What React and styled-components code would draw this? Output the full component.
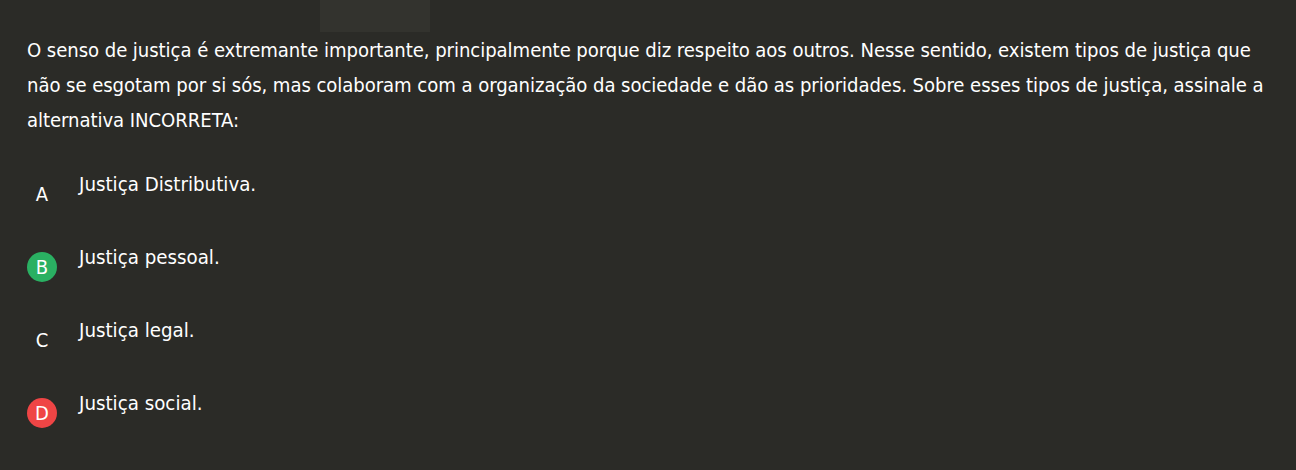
import styled, { createGlobalStyle } from "styled-components";

const GlobalStyle = createGlobalStyle`
  html, body {
    margin: 0;
    background: #2b2b27;
  }
  body {
    font-family: "DejaVu Sans Condensed", "DejaVu Sans", sans-serif;
    color: #ffffff;
  }
`;

const options = [
  { letter: "A", text: "Justiça Distributiva." },
  { letter: "B", text: "Justiça pessoal.", state: "correct" },
  { letter: "C", text: "Justiça legal." },
  { letter: "D", text: "Justiça social.", state: "wrong" },
];

export default function App() {
  return (
    <StyledPage>
      <GlobalStyle />
      <StyledTopBar>
        <StyledTab />
      </StyledTopBar>
      <StyledQuestion>
        O senso de justiça é extremante importante, principalmente porque diz
        respeito aos outros. Nesse sentido, existem tipos de justiça que não se
        esgotam por si sós, mas colaboram com a organização da sociedade e dão
        as prioridades. Sobre esses tipos de justiça, assinale a alternativa
        INCORRETA:
      </StyledQuestion>
      <StyledOptions>
        {options.map((option) => (
          <StyledOption key={option.letter}>
            <StyledLetter state={option.state}>{option.letter}</StyledLetter>
            <StyledOptionText>{option.text}</StyledOptionText>
          </StyledOption>
        ))}
      </StyledOptions>
    </StyledPage>
  );
}

const StyledPage = styled.div`
  width: 1296px;
  height: 470px;
  box-sizing: border-box;
  padding: 0 27px;
  overflow: hidden;
`;

const StyledTopBar = styled.div`
  display: flex;
  height: 32px;
  padding-left: 293px;
`;

const StyledTab = styled.div`
  width: 110px;
  height: 32px;
  background-color: #33332e;
`;

const StyledQuestion = styled.p`
  margin: 1px 0 0;
  font-size: 20.1px;
  letter-spacing: -0.06px;
  line-height: 35px;
`;

const StyledOptions = styled.div`
  display: flex;
  flex-direction: column;
  gap: 33px;
  margin-top: 31px;
`;

const StyledOption = styled.div`
  display: flex;
  align-items: flex-start;
  gap: 22px;
  height: 40px;
`;

const StyledLetter = styled.div`
  display: flex;
  align-items: center;
  justify-content: center;
  flex-shrink: 0;
  width: 30px;
  height: 30px;
  margin-top: 10px;
  border-radius: 50%;
  font-size: 20px;
  line-height: 1;
  background-color: ${({ state }) =>
    state === "correct" ? "#2ab062" : state === "wrong" ? "#ef4545" : "transparent"};
`;

const StyledOptionText = styled.div`
  font-size: 20.3px;
  line-height: 30px;
`;
